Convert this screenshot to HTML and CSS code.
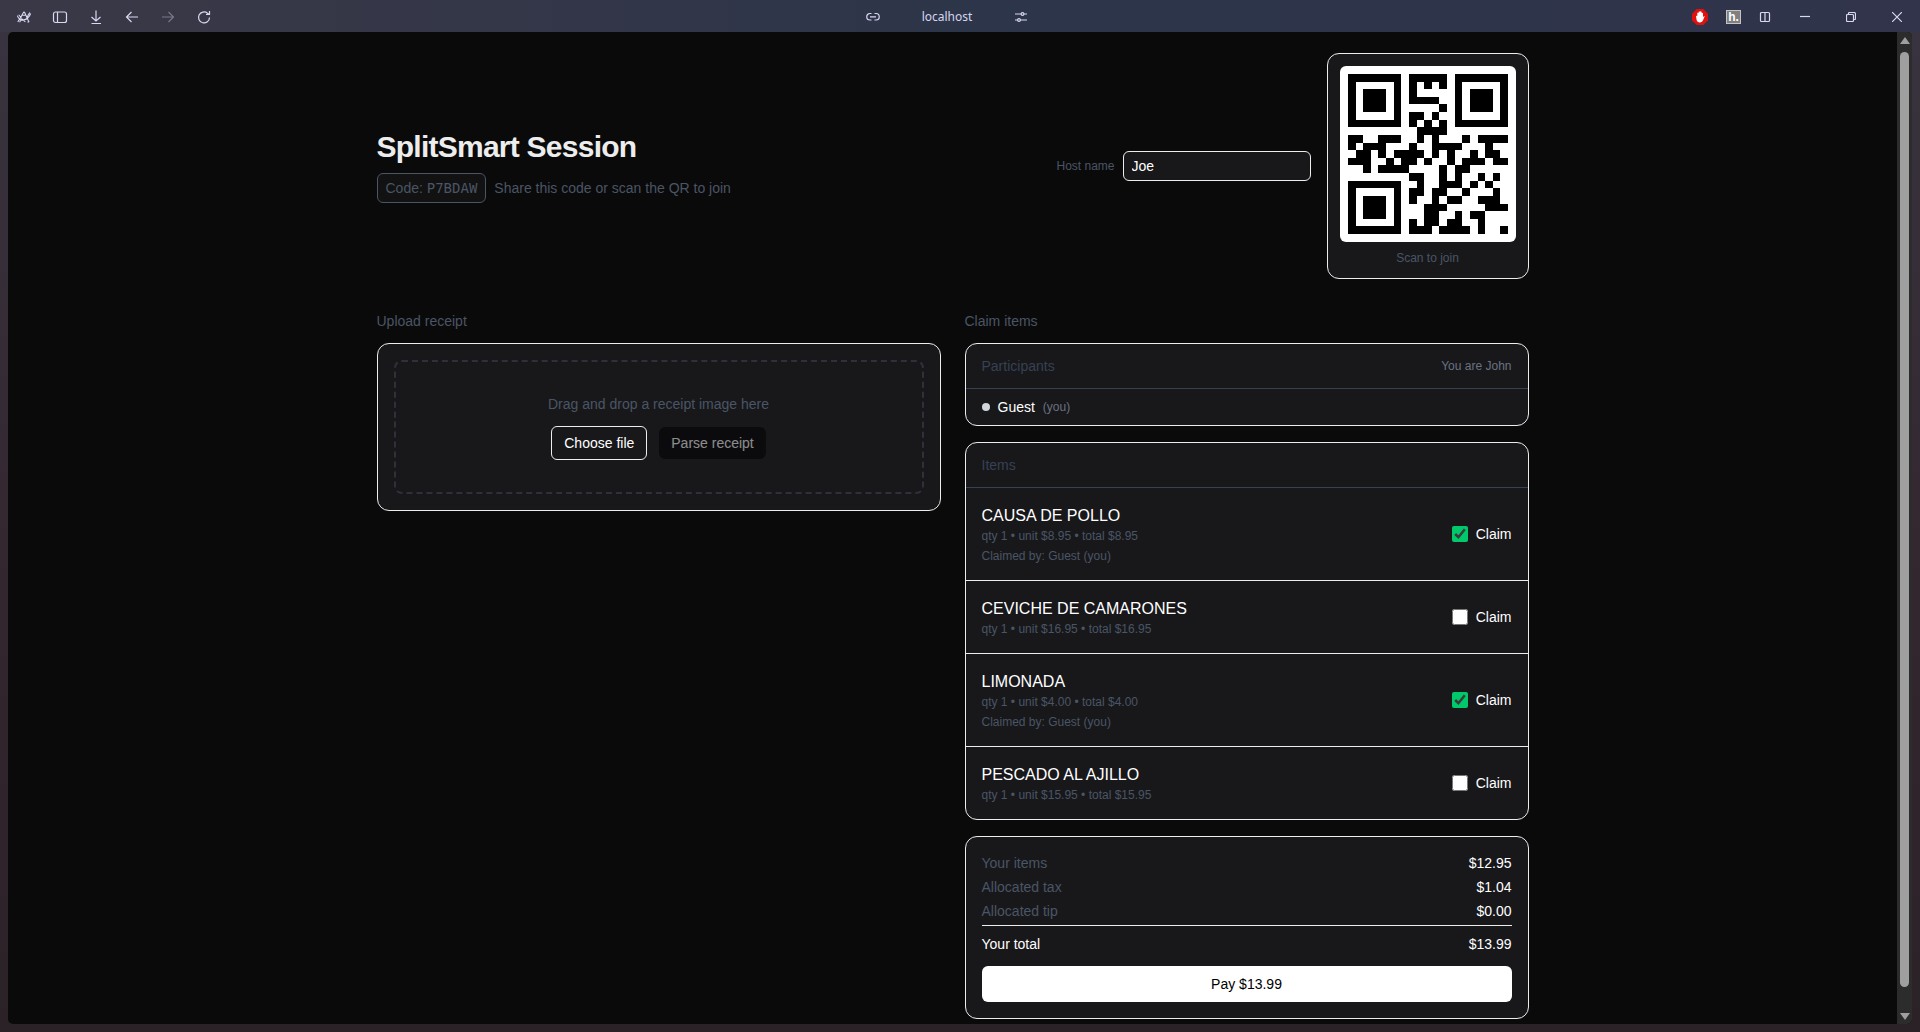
FILE: index.html
```html
<!DOCTYPE html>
<html lang="en">
<head>
  <meta charset="UTF-8">
  <meta name="viewport" content="width=device-width, initial-scale=1">
  <title>SplitSmart Session</title>
  <link rel="stylesheet" href="styles.css">
</head>
<body>
  <!-- Browser toolbar -->
  <header class="toolbar">
    <div class="toolbar-group toolbar-left">
      <button class="tool" aria-label="Menu">
        <svg width="16" height="16" viewBox="0 0 18 16"><path d="M2 13.500 L5 9 L8 3.500 Q9 1.500 10 3.500 L14.500 13.500 M1.500 6.500 Q3.500 12 8 11.500 Q14 10.500 16.500 4 M3 5.500 L6 9 M15.500 3 L12 9 M4 14 L6.500 10 L10.500 13.500 M6.500 6 H11 M13 14 L15 13"/></svg>
      </button>
      <button class="tool" aria-label="Toggle sidebar">
        <svg width="16" height="16" viewBox="0 0 16 16"><rect x="1.500" y="3" width="13" height="10.500" rx="2"/><path d="M5.500 3 V13.500"/></svg>
      </button>
      <button class="tool" aria-label="Downloads">
        <svg width="16" height="16" viewBox="0 0 16 16"><path d="M8 1.500 V12 M3.500 8 L8 12 L12.500 8 M3.500 14.500 H13"/></svg>
      </button>
      <button class="tool" aria-label="Back">
        <svg width="16" height="16" viewBox="0 0 16 16"><path d="M14 8 H2.500 M7.500 3 L2.500 8 L7.500 13"/></svg>
      </button>
      <button class="tool tool-off" aria-label="Forward" disabled>
        <svg width="16" height="16" viewBox="0 0 16 16"><path d="M2 8 H13.500 M8.500 3 L13.500 8 L8.500 13"/></svg>
      </button>
      <button class="tool" aria-label="Reload">
        <svg width="16" height="16" viewBox="0 0 16 16"><path d="M13.500 8.500 A5.500 5.500 0 1 1 11.500 4.200 L13 5.500 M13.500 2 V5.500 H10"/></svg>
      </button>
    </div>
    <div class="toolbar-group toolbar-address">
      <button class="tool" aria-label="Copy link">
        <svg width="14" height="14" viewBox="0 0 14 14"><path d="M5.500 3.500 H4 A3.200 3.200 0 0 0 4 10 H5.500 M8.500 3.500 H10 A3.200 3.200 0 0 1 10 10 H8.500 M4 6.800 H10"/></svg>
      </button>
      <span class="address">localhost</span>
      <button class="tool" aria-label="Site settings">
        <svg width="14" height="14" viewBox="0 0 14 14"><path d="M1 4 H7 M10 4 H13 M1 10 H3.500 M6.500 10 H13"/><circle cx="8.500" cy="4" r="1.400"/><circle cx="5" cy="10" r="1.400"/></svg>
      </button>
    </div>
    <div class="toolbar-group toolbar-right">
      <button class="tool" aria-label="Ad blocker">
        <svg class="solid" width="16" height="16" viewBox="0 0 16 16"><path fill="#e0120f" d="M4.700 0 H11.300 L16 4.700 V11.300 L11.300 16 H4.700 L0 11.300 V4.700 Z"/><path fill="#fff" d="M4 7 Q4.500 6.300 5.300 7 V4 Q6 3 6.700 4 V2.800 Q7.400 2 8.100 2.800 V2.500 Q8.900 1.800 9.600 2.800 V4 Q10.400 3.300 11 4.300 V8 Q12 6.800 12.800 7.300 Q11.800 9 11.300 10.800 Q10.400 13.300 8 13.500 Q5 13.300 4.500 10.500 Z"/></svg>
      </button>
      <button class="tool" aria-label="Annotations"><span class="note-icon">h.</span></button>
      <button class="tool" aria-label="Split view">
        <svg width="12" height="12" viewBox="0 0 12 12"><rect x="1.500" y="1.500" width="9" height="9" rx="1"/><path d="M6 1.500 V10.500"/></svg>
      </button>
      <div class="toolbar-group window-controls">
        <button class="tool" aria-label="Minimize">
          <svg width="10" height="10" viewBox="0 0 10 10"><path d="M0 4.500 H10"/></svg>
        </button>
        <button class="tool" aria-label="Restore">
          <svg width="10" height="10" viewBox="0 0 10 10"><rect x="0.500" y="2.500" width="7" height="7" rx="1"/><path d="M2.500 2 V1.500 Q2.500 0.500 3.500 0.500 H8 Q9.500 0.500 9.500 2 V6.500 Q9.500 7.500 8.500 7.500 H8"/></svg>
        </button>
        <button class="tool" aria-label="Close">
          <svg width="10" height="10" viewBox="0 0 10 10"><path d="M0 0 L10 10 M10 0 L0 10"/></svg>
        </button>
      </div>
    </div>
  </header>

  <div class="viewport">
    <main class="page">
      <div class="container">
        <!-- Session header -->
        <section class="session">
          <div class="session-info">
            <h1>SplitSmart Session</h1>
            <div class="session-code">
              <span class="code-pill">Code: <span class="code">P7BDAW</span></span>
              <span>Share this code or scan the QR to join</span>
            </div>
          </div>
          <div class="session-side">
            <div class="host">
              <label for="host-name">Host name</label>
              <input id="host-name" type="text" value="Joe">
            </div>
            <div class="qr-card">
              <div class="qr-box">
                <svg id="qr" width="160" height="160" viewBox="0 0 21 21" shape-rendering="crispEdges" role="img" aria-label="QR code"></svg>
              </div>
              <div class="qr-caption">Scan to join</div>
            </div>
          </div>
        </section>

        <div class="columns">
          <!-- Upload -->
          <section class="column">
            <h2>Upload receipt</h2>
            <div class="card upload">
              <div class="dropzone">
                <p>Drag and drop a receipt image here</p>
                <div class="dropzone-actions">
                  <button class="btn btn-outline">Choose file</button>
                  <button class="btn btn-dark" disabled>Parse receipt</button>
                </div>
              </div>
            </div>
          </section>

          <!-- Claim -->
          <section class="column">
            <h2>Claim items</h2>
            <div class="cards">
              <div class="card">
                <div class="card-head">
                  <h3>Participants</h3>
                  <span class="me">You are John</span>
                </div>
                <ul class="people">
                  <li><span class="dot"></span><span>Guest</span><span class="me">(you)</span></li>
                </ul>
              </div>

              <div class="card">
                <div class="card-head">
                  <h3>Items</h3>
                </div>
                <ul class="items">
                  <li>
                    <div>
                      <div class="item-name">CAUSA DE POLLO</div>
                      <div class="item-meta">qty 1 • unit $8.95 • total $8.95</div>
                      <div class="item-meta item-claimed">Claimed by: Guest (you)</div>
                    </div>
                    <label class="claim"><input type="checkbox" checked> Claim</label>
                  </li>
                  <li>
                    <div>
                      <div class="item-name">CEVICHE DE CAMARONES</div>
                      <div class="item-meta">qty 1 • unit $16.95 • total $16.95</div>
                    </div>
                    <label class="claim"><input type="checkbox"> Claim</label>
                  </li>
                  <li>
                    <div>
                      <div class="item-name">LIMONADA</div>
                      <div class="item-meta">qty 1 • unit $4.00 • total $4.00</div>
                      <div class="item-meta item-claimed">Claimed by: Guest (you)</div>
                    </div>
                    <label class="claim"><input type="checkbox" checked> Claim</label>
                  </li>
                  <li>
                    <div>
                      <div class="item-name">PESCADO AL AJILLO</div>
                      <div class="item-meta">qty 1 • unit $15.95 • total $15.95</div>
                    </div>
                    <label class="claim"><input type="checkbox"> Claim</label>
                  </li>
                </ul>
              </div>

              <div class="card summary">
                <dl>
                  <div class="line"><dt>Your items</dt><dd>$12.95</dd></div>
                  <div class="line"><dt>Allocated tax</dt><dd>$1.04</dd></div>
                  <div class="line"><dt>Allocated tip</dt><dd>$0.00</dd></div>
                  <div class="line total"><dt>Your total</dt><dd>$13.99</dd></div>
                </dl>
                <button class="pay">Pay $13.99</button>
              </div>
            </div>
          </section>
        </div>
      </div>
    </main>
    <div class="scrollbar" aria-hidden="true">
      <span class="arrow arrow-up"></span>
      <span class="thumb"></span>
      <span class="arrow arrow-down"></span>
    </div>
  </div>

  <script src="qr.js"></script>
</body>
</html>
```

FILE: styles.css
```css
* {
  margin: 0;
  padding: 0;
  box-sizing: border-box;
}
body {
  display: flex;
  flex-direction: column;
  min-height: 100vh;
  padding: 0 8px 8px;
  font-family: "Liberation Sans", Arial, sans-serif;
  font-size: 14px;
  line-height: 20px;
  color: #fff;
  background: linear-gradient(to right, #3a3846, #2c354a 55%, #31344a) top / 100% 32px no-repeat,
    linear-gradient(#38343f, #33262e 60%, #2b2228);
}
button, input {
  font: inherit;
  color: inherit;
}
ul {
  list-style: none;
}

/* Toolbar */
.toolbar {
  display: grid;
  grid-template-columns: 1fr auto 1fr;
  align-items: center;
  height: 32px;
  padding-top: 1px;
}
.toolbar-group {
  display: flex;
  align-items: center;
}
.tool {
  display: flex;
  align-items: center;
  justify-content: center;
  border: none;
  background: none;
  color: #d9d8f2;
}
.tool-off {
  opacity: 0.4;
}
.tool svg {
  fill: none;
  stroke: currentColor;
  stroke-width: 1.2;
}
.tool .solid {
  stroke: none;
}
.toolbar-left {
  gap: 20px;
  padding-left: 8px;
}
.toolbar-address {
  gap: 42px;
  padding-right: 26px;
}
.address {
  font-family: "Noto Sans", sans-serif;
  font-size: 12px;
  color: #d6d6f0;
}
.toolbar-right {
  justify-content: flex-end;
  gap: 18px;
  padding-right: 10px;
}
.window-controls {
  gap: 36px;
  margin-left: 11px;
}
.note-icon {
  width: 15px;
  height: 14px;
  border: 1px solid #c4c4c4;
  background: #808080;
  color: #fff;
  font-size: 12px;
  font-weight: bold;
  line-height: 12px;
}

/* Page */
.viewport {
  flex: 1;
  display: flex;
  border-radius: 5px;
  overflow: hidden;
  background: #0a0a0a;
}
.page {
  flex: 1;
  padding: 21px 24px 5px;
}
.container {
  max-width: 1152px;
  margin: 0 auto;
}
.session {
  display: flex;
  align-items: center;
  justify-content: space-between;
  margin-bottom: 32px;
  color: #4a5565;
}
h1 {
  margin-bottom: 8px;
  font-size: 30px;
  line-height: 36px;
  letter-spacing: -0.025em;
  color: #ededed;
}
.session-code {
  display: flex;
  align-items: center;
  gap: 8px;
}
.code-pill {
  padding: 4px 8px;
  border: 1px solid #4a5565;
  border-radius: 6px;
  background: #121213;
}
.code {
  font-family: "DejaVu Sans Mono", monospace;
  line-height: 16px;
}
.session-side {
  display: flex;
  align-items: center;
  gap: 16px;
}
.host {
  display: flex;
  align-items: center;
  gap: 8px;
  font-size: 12px;
}
.host input {
  width: 188px;
  height: 30px;
  padding: 4px 8px;
  border: 1px solid #ededed;
  border-radius: 6px;
  background: #18181b;
  color: #fff;
  font-size: 14px;
}
.qr-card {
  padding: 12px;
  border: 1px solid #ededed;
  border-radius: 12px;
  background: #18181b;
}
.qr-box {
  padding: 8px;
  border-radius: 6px;
  background: #fff;
}
.qr-box svg {
  display: block;
}
.qr-caption {
  margin-top: 8px;
  font-size: 12px;
  line-height: 16px;
  text-align: center;
}

/* Columns */
.columns {
  display: grid;
  grid-template-columns: 1fr 1fr;
  align-items: start;
  gap: 24px;
}
h2 {
  margin-bottom: 12px;
  font-size: 14px;
  font-weight: normal;
  color: #4a5565;
}
.cards {
  display: grid;
  gap: 16px;
}
.card {
  border: 1px solid #ededed;
  border-radius: 12px;
  background: #18181b;
}
.upload {
  padding: 16px;
}
.dropzone {
  padding: 32px;
  border: 2px dashed #30303a;
  border-radius: 8px;
  text-align: center;
  color: #4a5565;
}
.dropzone-actions {
  display: flex;
  align-items: center;
  justify-content: center;
  gap: 12px;
  margin-top: 12px;
}
.btn {
  padding: 6px 12px;
  border: none;
  border-radius: 6px;
  color: #fff;
}
.btn-outline {
  border: 1px solid #ededed;
  background: none;
}
.btn-dark {
  background: #000;
  opacity: 0.5;
}

.card-head {
  display: flex;
  align-items: center;
  justify-content: space-between;
  padding: 12px 16px;
  border-bottom: 1px solid #364153;
}
h3 {
  font-size: 14px;
  font-weight: normal;
  color: #364153;
}
.me {
  font-size: 12px;
  color: #6a7282;
}
.people li {
  display: flex;
  align-items: center;
  gap: 8px;
  padding: 8px 16px;
}
.dot {
  width: 8px;
  height: 8px;
  border-radius: 50%;
  background: #d1d5dc;
}

.items li {
  display: flex;
  align-items: center;
  justify-content: space-between;
  padding: 16px;
}
.items li + li {
  border-top: 1px solid #ededed;
}
.item-name {
  font-size: 16px;
  line-height: 24px;
}
.item-meta {
  font-size: 12px;
  line-height: 16px;
  color: #4a5565;
}
.item-claimed {
  margin-top: 4px;
}
.claim {
  display: flex;
  align-items: center;
  gap: 8px;
}
.claim input {
  width: 16px;
  height: 16px;
  accent-color: #00c96b;
}

/* Totals */
.summary {
  padding: 16px;
}
.summary dl {
  display: grid;
  gap: 4px;
}
.line {
  display: flex;
  justify-content: space-between;
}
.line dt {
  color: #4a5565;
}
.total {
  padding-top: 8px;
  border-top: 1px solid #ededed;
}
.total dt {
  color: #fff;
}
.pay {
  width: 100%;
  height: 36px;
  margin-top: 12px;
  border: none;
  border-radius: 6px;
  background: #fff;
  color: #000;
}

/* Scrollbar */
.scrollbar {
  display: flex;
  flex-direction: column;
  align-items: center;
  width: 15px;
  padding: 5px 0 4px;
  background: #2c2c2c;
}
.arrow {
  border: 5px solid transparent;
}
.arrow-up {
  border-top: none;
  border-bottom: 7px solid #9f9f9f;
}
.arrow-down {
  border-bottom: none;
  border-top: 7px solid #9f9f9f;
}
.thumb {
  flex: 1;
  width: 9px;
  margin: 8px 0 26px;
  border-radius: 5px;
  background: #9f9f9f;
}
```

FILE: qr.js
```js
// One string per row, # is a dark module
var rows = [
  '#######.#####.#######',
  '#.....#.#.#.#.#.....#',
  '#.###.#.#.....#.###.#',
  '#.###.#.####..#.###.#',
  '#.###.#.....#.#.###.#',
  '#.....#.##.#..#.....#',
  '#######.#.#.#.#######',
  '.........####........',
  '##..###..#.#...#.####',
  '#.###...#..####...#..',
  '.##.#.####.#.#..#.##.',
  '###..#.##.#..#.###.##',
  '..#.####....#.##.....',
  '........##..#.#..#.#.',
  '#######..#..###.#.#..',
  '#.....#.##.##..#...#.',
  '#.###.#.#..#.##..###.',
  '#.###.#...###.....###',
  '#.###.#...##..#.##...',
  '#.....#.#.##.##..#...',
  '#######.###.####.#..#'
];
var path = '';
rows.forEach(function (row, y) {
  for (var x = 0; x < row.length; x++) {
    if (row[x] === '#') path += 'M' + x + ' ' + y + 'h1v1h-1z';
  }
});
var el = document.createElementNS('http://www.w3.org/2000/svg', 'path');
el.setAttribute('d', path);
document.getElementById('qr').appendChild(el);
```
